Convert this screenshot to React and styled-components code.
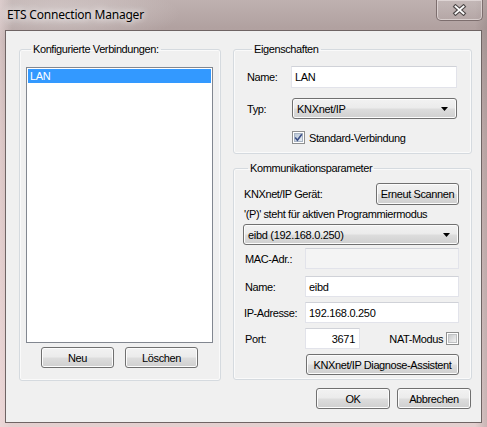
import React from 'react';
import styled, { createGlobalStyle } from 'styled-components';

const GlobalStyle = createGlobalStyle`
  html, body { margin: 0; padding: 0; }
  body {
    width: 487px;
    height: 427px;
    overflow: hidden;
    font-family: "Liberation Sans", Arial, sans-serif;
  }
  * { box-sizing: border-box; }
`;

const Window = styled.div`
  width: 487px;
  height: 427px;
  display: flex;
  flex-direction: column;
  background:
    radial-gradient(ellipse 120px 30px at 60px 14px, rgba(230, 222, 222, 0.55), rgba(230, 222, 222, 0) 100%),
    linear-gradient(90deg, rgba(245, 225, 225, 0.5) 0, rgba(245, 225, 225, 0) 12px, rgba(0, 0, 0, 0) 475px, rgba(120, 105, 105, 0.25) 100%),
    linear-gradient(180deg, #bfb1b0 0, #b1a1a0 28px, #c9b4b3 140px, #e4cfcf 100%);
`;

const TitleBar = styled.div`
  height: 30px;
  display: flex;
  align-items: flex-start;
  padding-left: 7px;
`;

const Title = styled.div`
  margin-top: 7px;
  font-family: "Noto Sans", "Open Sans", sans-serif;
  font-size: 12px;
  line-height: 16px;
  color: #000;
  letter-spacing: -0.2px;
  text-shadow: 0 0 6px rgba(255, 255, 255, 0.9), 0 0 10px rgba(255, 255, 255, 0.7);
`;

const CloseButton = styled.div`
  margin-left: auto;
  margin-right: 4px;
  width: 47px;
  height: 21px;
  border: 1px solid #7d6e6e;
  border-top: none;
  border-radius: 0 0 5px 5px;
  box-shadow: inset 0 0 0 1px rgba(240, 232, 232, 0.6);
  background: linear-gradient(180deg, rgba(200, 190, 190, 0.5), rgba(180, 168, 168, 0.3));
  display: flex;
  align-items: center;
  justify-content: center;
`;

const Client = styled.div`
  flex: 1;
  margin: 0 5px 4px 5px;
  border: 1px solid #6f6464;
  background: #f0f0f0;
  padding: 12px 10px 0 13px;
  display: flex;
  flex-direction: column;
`;

const Columns = styled.div`
  display: grid;
  grid-template-columns: 202px 239px;
  column-gap: 12px;
`;

const RightColumn = styled.div`
  display: flex;
  flex-direction: column;
  gap: 8px;
`;

const Group = styled.fieldset`
  margin: 0;
  min-width: 0;
  border: 1px solid #d5dadf;
  border-radius: 3px;
  box-shadow: inset 0 0 0 1px #fafafa;
  padding: ${p => p.$pad};
`;

const Legend = styled.legend`
  margin-left: 5px;
  padding: 0 2px;
  font-size: 11px;
  line-height: 13px;
  letter-spacing: -0.4px;
  color: #000;
`;

const ListBox = styled.div`
  height: 276px;
  background: #fff;
  border: 1px solid #828790;
  padding: 1px;
`;

const ListItem = styled.div`
  height: 14px;
  line-height: 14px;
  padding-left: 2px;
  font-size: 11px;
  letter-spacing: -0.3px;
  background: ${p => (p.$selected ? '#3399ff' : 'transparent')};
  color: ${p => (p.$selected ? '#fff' : '#000')};
`;

const ButtonRow = styled.div`
  display: flex;
  justify-content: ${p => p.$justify || 'center'};
  gap: ${p => p.$gap || 11}px;
  margin-top: ${p => p.$top || 0}px;
`;

const Button = styled.div`
  width: ${p => p.$w}px;
  height: ${p => p.$h || 21}px;
  border: 1px solid #707070;
  border-radius: 3px;
  background: linear-gradient(180deg, #f2f2f2 0%, #ebebeb 48%, #dddddd 52%, #cfcfcf 100%);
  box-shadow: inset 0 0 0 1px #fcfcfc;
  display: flex;
  align-items: center;
  justify-content: center;
  font-size: 11px;
  letter-spacing: -0.4px;
  color: #000;
`;

const Row = styled.div`
  display: grid;
  grid-template-columns: ${p => p.$label}px 1fr;
  align-items: center;
  margin-top: ${p => p.$top || 0}px;
`;

const Label = styled.span`
  font-size: 11px;
  letter-spacing: -0.4px;
  color: #000;
  padding-left: ${p => p.$indent || 0}px;
  white-space: nowrap;
`;

const TextInput = styled.div`
  height: ${p => p.$h || 21}px;
  width: ${p => (p.$w ? `${p.$w}px` : 'auto')};
  border: 1px solid #e2e3ea;
  border-top-color: #d0d2d8;
  background: ${p => (p.$disabled ? '#f4f4f4' : '#fff')};
  display: flex;
  align-items: center;
  justify-content: ${p => (p.$right ? 'flex-end' : 'flex-start')};
  padding: 0 4px 0 3px;
  font-size: 11px;
  letter-spacing: -0.3px;
  color: #000;
`;

const Combo = styled.div`
  height: 21px;
  margin-left: ${p => p.$left || 0}px;
  border: 1px solid #707070;
  border-radius: 3px;
  background: linear-gradient(180deg, #f2f2f2 0%, #ebebeb 48%, #dddddd 52%, #cfcfcf 100%);
  box-shadow: inset 0 0 0 1px #fcfcfc;
  display: flex;
  align-items: center;
  justify-content: space-between;
  padding: 0 8px 0 4px;
  font-size: 11px;
  letter-spacing: -0.3px;
  color: #000;
`;

const CheckLine = styled.div`
  display: flex;
  align-items: center;
  gap: 4px;
  margin-top: ${p => p.$top || 0}px;
  margin-left: ${p => p.$left || 0}px;
`;

const Box = styled.span`
  width: 13px;
  height: 13px;
  border: 1px solid #8e8f8f;
  background: #fff;
  padding: 1px;
  display: inline-flex;
  flex-shrink: 0;
`;

const BoxInner = styled.span`
  position: relative;
  flex: 1;
  background: ${p => (p.$checked
    ? 'linear-gradient(135deg, #b9c6d6 0%, #e6ecf3 100%)'
    : 'linear-gradient(135deg, #c9cbcd 0%, #f1f1f1 100%)')};
  border: 1px solid ${p => (p.$checked ? '#a9b5c4' : '#c0c2c4')};
`;

const CheckMark = styled.svg`
  position: absolute;
  left: -1px;
  top: -1px;
`;

const Text = styled.div`
  font-size: 11px;
  line-height: 14px;
  letter-spacing: -0.4px;
  color: #000;
  padding-left: 1px;
  margin-top: ${p => p.$top || 0}px;
  margin-bottom: 3px;
`;

const TopLine = styled.div`
  display: flex;
  align-items: center;
  justify-content: space-between;
`;

const PortLine = styled.div`
  display: flex;
  align-items: center;
`;

const Nat = styled.div`
  margin-left: auto;
  display: flex;
  align-items: center;
  gap: 3px;
`;

const Arrow = () => (
  <svg width="7" height="4" viewBox="0 0 7 4">
    <polygon points="0,0 7,0 3.5,4" fill="#000" />
  </svg>
);

const Check = ({ checked }) => (
  <Box>
    <BoxInner $checked={checked}>
      {checked && (
        <CheckMark width="9" height="9" viewBox="0 0 9 9">
          <path d="M1.2 4.6 L3.4 7.2 L7.8 1.2" fill="none" stroke="#3b4f86" strokeWidth="1.6" />
        </CheckMark>
      )}
    </BoxInner>
  </Box>
);

export default function App() {
  return (
    <Window>
      <GlobalStyle />
      <TitleBar>
        <Title>ETS Connection Manager</Title>
        <CloseButton>
          <svg width="15" height="12" viewBox="0 0 15 12">
            <path d="M3.5 2.5 L11.5 9.5 M11.5 2.5 L3.5 9.5" stroke="#4d4848" strokeWidth="4" strokeLinecap="square" />
            <path d="M3.5 2.5 L11.5 9.5 M11.5 2.5 L3.5 9.5" stroke="#ffffff" strokeWidth="1.8" strokeLinecap="square" />
          </svg>
        </CloseButton>
      </TitleBar>
      <Client>
        <Columns>
          <Group $pad="11px 7px 12px 6px">
            <Legend>Konfigurierte Verbindungen:</Legend>
            <ListBox>
              <ListItem $selected>LAN</ListItem>
            </ListBox>
            <ButtonRow $top={4}>
              <Button $w={73}>Neu</Button>
              <Button $w={73}>Löschen</Button>
            </ButtonRow>
          </Group>
          <RightColumn>
            <Group $pad="10px 14px 9px 13px">
              <Legend>Eigenschaften</Legend>
              <Row $label={44}>
                <Label>Name:</Label>
                <TextInput $h={22}>LAN</TextInput>
              </Row>
              <Row $label={44} $top={10}>
                <Label>Typ:</Label>
                <Combo $left={1}>KNXnet/IP<Arrow /></Combo>
              </Row>
              <CheckLine $top={12} $left={45}>
                <Check checked />
                <Label>Standard-Verbindung</Label>
              </CheckLine>
            </Group>
            <Group $pad="8px 12px 4px 9px">
              <Legend>Kommunikationsparameter</Legend>
              <TopLine>
                <Label $indent={1}>KNXnet/IP Gerät:</Label>
                <Button $w={83} $h={22}>Erneut Scannen</Button>
              </TopLine>
              <Text $top={2}>'(P)' steht für aktiven Programmiermodus</Text>
              <Combo>eibd (192.168.0.250)<Arrow /></Combo>
              <Row $label={62} $top={3}>
                <Label $indent={2}>MAC-Adr.:</Label>
                <TextInput $disabled />
              </Row>
              <Row $label={62} $top={7}>
                <Label $indent={2}>Name:</Label>
                <TextInput>eibd</TextInput>
              </Row>
              <Row $label={62} $top={5}>
                <Label $indent={1}>IP-Adresse:</Label>
                <TextInput>192.168.0.250</TextInput>
              </Row>
              <Row $label={62} $top={5}>
                <Label $indent={2}>Port:</Label>
                <PortLine>
                  <TextInput $w={55} $right>3671</TextInput>
                  <Nat>
                    <Label>NAT-Modus</Label>
                    <Check />
                  </Nat>
                </PortLine>
              </Row>
              <ButtonRow $justify="flex-end" $top={5}>
                <Button $w={153}>KNXnet/IP Diagnose-Assistent</Button>
              </ButtonRow>
            </Group>
          </RightColumn>
        </Columns>
        <ButtonRow $justify="flex-end" $gap={7} $top={7}>
          <Button $w={74}>OK</Button>
          <Button $w={74}>Abbrechen</Button>
        </ButtonRow>
      </Client>
    </Window>
  );
}
